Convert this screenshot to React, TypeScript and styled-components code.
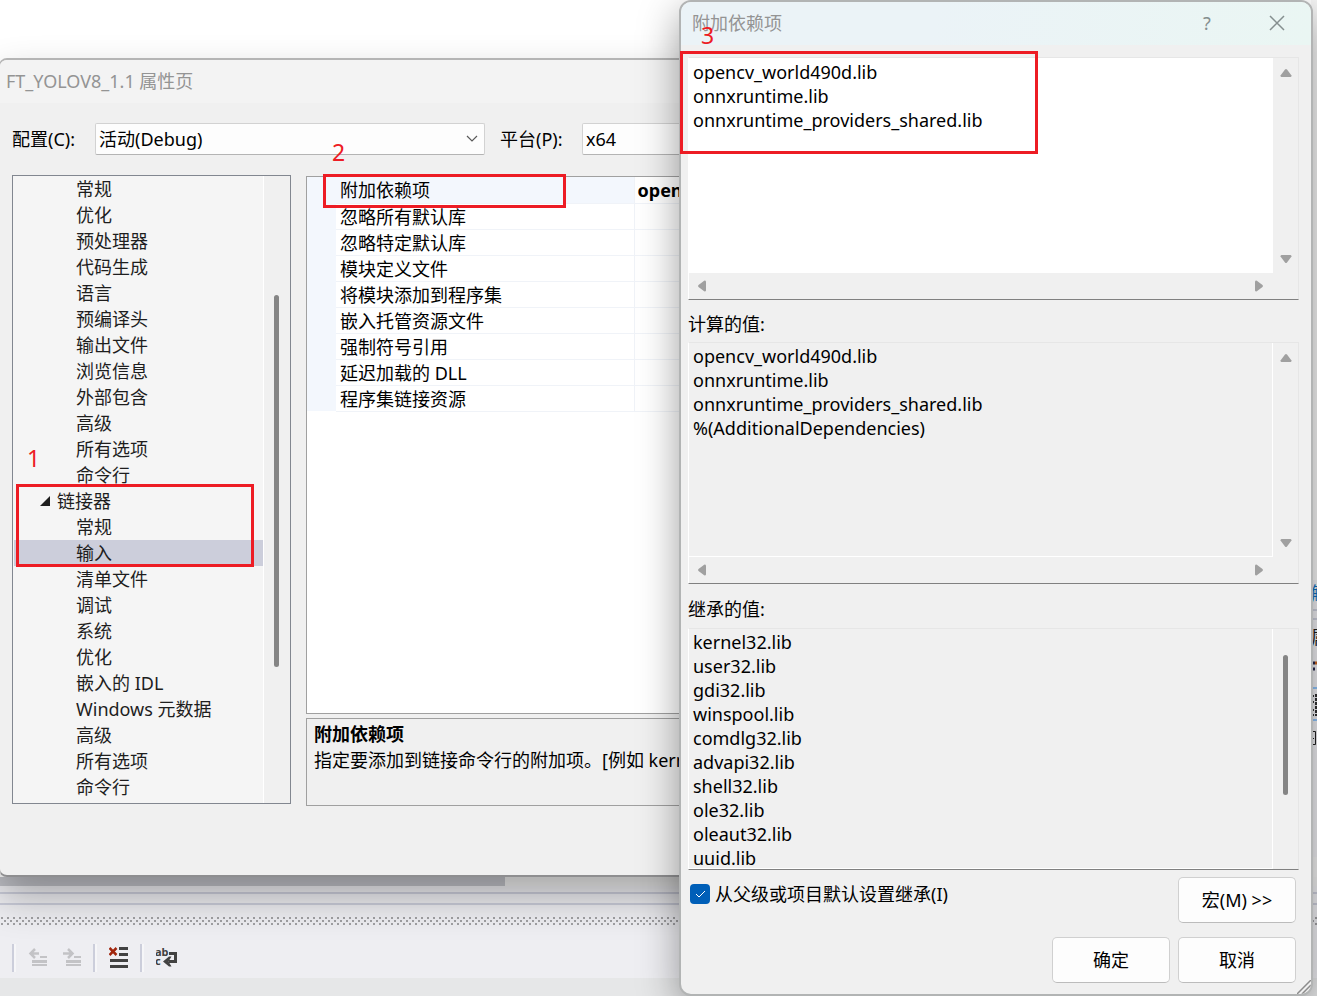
import React from "react";
import styled, { createGlobalStyle, css } from "styled-components";

const GlobalStyle = createGlobalStyle`
  * { box-sizing: border-box; }
  body {
    margin: 0;
    font-family: "Noto Sans", "Noto Sans CJK SC", sans-serif;
    font-size: 18px;
    line-height: 26px;
    color: #000;
  }
  button, select, textarea, input { font: inherit; color: inherit; }
`;

const Desktop = styled.div`
  position: relative;
  display: flex;
  flex-direction: column;
  min-height: 100vh;
  overflow: hidden;
  background: #eeeef2;
`;

/* ---------- IDE behind the windows ---------- */

const EditorRow = styled.div`
  flex: 1;
  display: flex;
  background: #fff;
`;

const EditorArea = styled.div`
  flex: 1;
`;

const SidePanel = styled.aside`
  width: 6px;
  height: 877px;
  padding-top: 580px;
  overflow: hidden;
  white-space: nowrap;
  background: linear-gradient(#f7f7f7 0 580px, #eeeef2 580px 857px, #f2f2f2 857px);
`;

const SideText = styled.div<{ $link?: boolean }>`
  height: 29px;
  color: ${(p) => (p.$link ? "#0e70c0" : "#1e1e1e")};
`;

const SideRule = styled.div`
  height: 11px;
  margin-bottom: 4px;
  border-top: 2px solid #cccedb;
  border-bottom: 2px solid #cccedb;
`;

const ScrollTrack = styled.div`
  height: 9px;
  background: #f0f0f0;
`;

const ScrollHandle = styled.div`
  width: 505px;
  height: 9px;
  background: #c2c3c9;
`;

const SplitBand = styled.div`
  height: 13px;
  margin: 6px 0 12px;
  border-top: 2px solid #cccedb;
  border-bottom: 2px solid #cccedb;
`;

const GripBar = styled.svg`
  display: block;
  width: 100%;
  height: 8px;
`;

const Toolbar = styled.div`
  display: flex;
  align-items: center;
  height: 53px;
  padding: 19px 12px 6px;
`;

const ToolSeparator = styled.span`
  width: 4px;
  height: 28px;
  border-left: 2px solid #cccedb;
  border-right: 2px solid #f6f6f8;
`;

const ToolGroup = styled.div`
  display: flex;
  gap: 14px;
  padding: 0 11px 0 12px;
`;

const ToolButton = styled.button`
  display: flex;
  align-items: center;
  height: 28px;
  padding: 0;
  border: 0;
  background: none;
`;

const StatusBar = styled.div`
  height: 18px;
  background: #e6e7e8;
`;

/* ---------- Windows ---------- */

const PropertyWindow = styled.section`
  position: absolute;
  top: 58px;
  left: -1px;
  right: 40px;
  border: 2px solid #b5b5b5;
  border-left-width: 1px;
  border-bottom-color: #8e8e90;
  border-radius: 8px;
  background: #f0f0f0;
  box-shadow: 0 20px 40px rgba(0, 0, 0, 0.3);
  overflow: hidden;
`;

const TitleBar = styled.header<{ $active?: boolean }>`
  display: flex;
  align-items: center;
  height: 43px;
  padding-bottom: 2px;
  color: #949494;
  ${(p) =>
    p.$active
      ? css`
          padding-left: 11px;
          padding-right: 11px;
          background: linear-gradient(100deg, #ebf3f7 40%, #eaf6f3);
        `
      : css`
          padding-left: 6px;
          padding-right: 6px;
          background: #f3f3f3;
        `}
`;

const Title = styled.h1`
  flex: 1;
  margin: 0;
  font-size: 18px;
  font-weight: 400;
`;

const TitleButton = styled.button`
  width: 46px;
  height: 40px;
  margin-left: 24px;
  padding: 0;
  border: 0;
  background: none;
  color: #858f8f;
  svg { display: block; margin: auto; }
`;

const ConfigRow = styled.div`
  display: flex;
  align-items: center;
  margin: 20px 12px;
`;

const FieldLabel = styled.label<{ $width: number }>`
  width: ${(p) => p.$width}px;
  white-space: nowrap;
`;

const SelectWrap = styled.div`
  position: relative;
  width: 390px;
  margin-right: 15px;
`;

const Select = styled.select`
  display: block;
  width: 100%;
  height: 32px;
  padding: 0 3px;
  appearance: none;
  border: 1px solid #d2d2d2;
  border-bottom-color: #b4b4b4;
  border-radius: 2px;
  background: #fdfdfd;
`;

const Chevron = styled.svg`
  position: absolute;
  right: 7px;
  top: 12px;
  pointer-events: none;
`;

const Columns = styled.div`
  display: flex;
  align-items: flex-start;
  gap: 15px;
  margin: 0 12px 69px;
`;

const TreePane = styled.nav`
  display: flex;
  width: 279px;
  border: 1px solid #828790;
  background: #f5f5f5;
`;

const TreeList = styled.ul`
  flex: 1;
  margin: 0;
  padding: 0 0 3px 1px;
  list-style: none;
  border-right: 1px solid #fff;
`;

const TreeItem = styled.li<{ $parent?: boolean; $selected?: boolean }>`
  display: flex;
  align-items: center;
  gap: 7px;
  height: 26px;
  padding-left: ${(p) => (p.$parent ? 26 : 62)}px;
  background: ${(p) => (p.$selected ? "#cccedb" : "none")};
  color: #1e1e1e;
  white-space: nowrap;
`;

const TreeScroll = styled.div`
  width: 26px;
  padding: 119px 10px 0;
  background: #f0f0f0;
`;

const Thumb = styled.div<{ $height: number }>`
  width: 5px;
  height: ${(p) => p.$height}px;
  border-radius: 3px;
  background: #858585;
`;

const Detail = styled.div`
  flex: 1;
  display: flex;
  flex-direction: column;
  gap: 4px;
  padding-top: 1px;
  min-width: 0;
`;

const GridPane = styled.div`
  height: 538px;
  border: 1px solid #a0a0a0;
  background: #fff;
`;

const PropertyTable = styled.table`
  width: 100%;
  border-collapse: collapse;
  table-layout: fixed;
`;

const Gutter = styled.td`
  width: 29px;
  height: 26px;
  padding: 0;
  background: #f3f7fd;
`;

const NameCell = styled.th<{ $selected: boolean }>`
  width: 298px;
  padding: 2px 4px 0;
  border-right: 1px solid #f0f3f8;
  border-bottom: 1px solid #f0f3f8;
  background: ${(p) => (p.$selected ? "#f3f7fd" : "#fff")};
  font-weight: 400;
  line-height: 23px;
  text-align: left;
`;

const ValueCell = styled.td`
  padding: 2px 3px 0;
  border-bottom: 1px solid #f0f3f8;
  font-weight: 700;
  line-height: 23px;
  white-space: nowrap;
`;

const Description = styled.div`
  height: 88px;
  padding: 2px 7px;
  border: 1px solid #a0a0a0;
  white-space: nowrap;
  overflow: hidden;
  p { margin: 0; }
`;

const Dialog = styled.section`
  position: absolute;
  top: 0;
  left: 679px;
  right: 4px;
  border: 2px solid #b2b4b4;
  border-radius: 12px;
  background: #f0f0f0;
  box-shadow: 0 12px 40px rgba(0, 0, 0, 0.38);
  overflow: hidden;
`;

const DialogBody = styled.div`
  display: flex;
  flex-direction: column;
  padding: 12px 12px 11px 7px;
`;

const BoxLabel = styled.label`
  margin: 11px 0 5px;
  & + div + & { margin: 12px 0 6px; }
`;

const TextBox = styled.div`
  display: grid;
  grid-template-columns: 1fr 25px;
  border: 1px solid #e6e6e6;
  border-left-color: #fff;
  border-bottom-color: #808080;
  background: #f0f0f0;
`;

const TextArea = styled.textarea<{ $editable?: boolean; $height: number }>`
  display: block;
  width: 100%;
  height: ${(p) => p.$height}px;
  padding: ${(p) => (p.$editable ? 2 : 1)}px 4px 0;
  border: 0;
  border-right: 1px solid #fff;
  border-bottom: 1px solid #fff;
  outline: 0;
  resize: none;
  overflow: hidden;
  background: ${(p) => (p.$editable ? "#fff" : "#f0f0f0")};
  font-size: 18px;
  line-height: 24px;
`;

const VScroll = styled.div<{ $thumb?: boolean }>`
  display: flex;
  flex-direction: column;
  align-items: center;
  justify-content: ${(p) => (p.$thumb ? "flex-start" : "space-between")};
  padding: ${(p) => (p.$thumb ? "26px 0 0" : "10px 0 9px")};
`;

const HScroll = styled.div`
  display: flex;
  align-items: center;
  justify-content: space-between;
  height: 26px;
  padding: 0 9px 1px 8px;
`;

const InheritRow = styled.div`
  display: flex;
  justify-content: space-between;
  align-items: flex-start;
  padding: 7px 3px 0 2px;
`;

const CheckLabel = styled.label`
  position: relative;
  display: flex;
  align-items: center;
  gap: 5px;
  padding-top: 4px;
  svg {
    position: absolute;
    left: 5px;
    top: 13px;
    pointer-events: none;
  }
`;

const CheckInput = styled.input`
  appearance: none;
  width: 20px;
  height: 20px;
  margin: 0;
  border-radius: 4px;
  background: #005fb8;
`;

const PushButton = styled.button`
  width: 118px;
  height: 46px;
  padding: 0;
  border: 1px solid #d0d0d0;
  border-bottom-color: #bcbcbc;
  border-radius: 5px;
  background: #fdfdfd;
`;

const ButtonRow = styled.footer`
  display: flex;
  justify-content: flex-end;
  gap: 8px;
  padding: 14px 3px 0;
`;

const ResizeGrip = styled.svg`
  position: absolute;
  right: 0;
  bottom: 0;
`;

/* ---------- Red step marks drawn over the windows ---------- */

const Mark = styled.div<{ $x: number; $y: number; $w: number; $h: number }>`
  position: absolute;
  left: ${(p) => p.$x}px;
  top: ${(p) => p.$y}px;
  width: ${(p) => p.$w}px;
  height: ${(p) => p.$h}px;
  border: 3px solid #ed1c24;
  pointer-events: none;
`;

const MarkNumber = styled.span<{ $x: number; $y: number }>`
  position: absolute;
  left: ${(p) => p.$x}px;
  top: ${(p) => p.$y}px;
  color: #ed1c24;
  font-size: 23px;
  line-height: 30px;
`;

/* ---------- Data ---------- */

type Node = { name: string; parent?: boolean; selected?: boolean };

const tree: Node[] = [
  ...["常规", "优化", "预处理器", "代码生成", "语言", "预编译头", "输出文件", "浏览信息", "外部包含", "高级", "所有选项", "命令行"].map((name) => ({ name })),
  { name: "链接器", parent: true },
  { name: "常规" },
  { name: "输入", selected: true },
  ...["清单文件", "调试", "系统", "优化", "嵌入的 IDL", "Windows 元数据", "高级", "所有选项", "命令行"].map((name) => ({ name })),
];

const properties = [
  "附加依赖项",
  "忽略所有默认库",
  "忽略特定默认库",
  "模块定义文件",
  "将模块添加到程序集",
  "嵌入托管资源文件",
  "强制符号引用",
  "延迟加载的 DLL",
  "程序集链接资源",
];

const ownLibs = ["opencv_world490d.lib", "onnxruntime.lib", "onnxruntime_providers_shared.lib"];
const computedLibs = [...ownLibs, "%(AdditionalDependencies)"];
const inheritedLibs = [
  "kernel32.lib", "user32.lib", "gdi32.lib", "winspool.lib", "comdlg32.lib",
  "advapi32.lib", "shell32.lib", "ole32.lib", "oleaut32.lib", "uuid.lib",
];

/* ---------- Small drawings ---------- */

const arrowPaths = {
  up: "M5 1.5 Q6 .5 7 1.5 L11.5 7.5 Q11.5 9 10.5 9 H1.5 Q.5 9 .5 7.5Z",
  down: "M5 8.5 Q6 9.5 7 8.5 L11.5 2.5 Q11.5 1 10.5 1 H1.5 Q.5 1 .5 2.5Z",
  left: "M1.5 5 Q.5 6 1.5 7 L7.5 11.5 Q9 11.5 9 10.5 V1.5 Q9 .5 7.5 .5Z",
  right: "M8.5 5 Q9.5 6 8.5 7 L2.5 11.5 Q1 11.5 1 10.5 V1.5 Q1 .5 2.5 .5Z",
};

const Arrow = ({ dir }: { dir: keyof typeof arrowPaths }) => {
  const vertical = dir === "up" || dir === "down";
  return (
    <svg width={vertical ? 12 : 10} height={vertical ? 10 : 12} aria-hidden="true">
      <path d={arrowPaths[dir]} fill="#a0a0a0" />
    </svg>
  );
};

const IndentIcon = ({ flip }: { flip?: boolean }) => (
  <svg width="20" height="20" viewBox="0 0 20 20" aria-hidden="true">
    <path
      d={flip ? "M1 5.5h8M6 1l4.500 4.500L6 10" : "M3 5.500h8M7 1L2.500 5.500 7 10"}
      fill="none"
      stroke="#c3c3c6"
      strokeWidth="2.5"
    />
    <path d="M12 8h7v2h-7zM4 12h15v3H4zM4 16h15v2H4z" fill="#c3c3c6" />
  </svg>
);

const ClearIcon = () => (
  <svg width="20" height="24" viewBox="0 0 20 24" aria-hidden="true">
    <path d="M10 1h9v3h-9zM10 7h9v3h-9zM1 13h18v3H1zM1 19h18v3H1z" fill="#424242" />
    <path d="M.5 2l7 7M7.5 2l-7 7" stroke="#a1260d" strokeWidth="2.5" />
  </svg>
);

const WrapIcon = () => (
  <svg width="24" height="24" viewBox="0 0 24 24" aria-hidden="true">
    <text x="-1" y="10" fontSize="11" fontWeight="700" fill="#424242">ab</text>
    <text x="-1" y="19" fontSize="11" fontWeight="700" fill="#424242">c</text>
    <path d="M13 7.500h6.500v8h-7" fill="none" stroke="#424242" strokeWidth="3" />
    <path d="M7 15.500l6-5h2.500l-3 5 3 5H13z" fill="#424242" />
  </svg>
);

function Ide() {
  return (
    <>
      <EditorRow>
        <EditorArea />
        <SidePanel>
          <SideText $link>解</SideText>
          <SideRule />
          <SideText>属性</SideText>
          <svg width="6" height="106" aria-hidden="true">
            <path d="M0 10h4M0 16h4" stroke="#26264a" strokeWidth="3" />
            <path d="M4 10h2" stroke="#c8641e" strokeWidth="3" />
            <path d="M0 35h6M0 67h6" stroke="#3399ff" strokeWidth="1" />
            <path d="M0 43h3M0 49h3M0 57h3M0 62h3M5 41v22" stroke="#333" strokeWidth="2" strokeDasharray="3 1" />
            <path d="M0 78.5h4.5v13H0M0 85.5h3" fill="none" stroke="#222" />
          </svg>
        </SidePanel>
      </EditorRow>
      <ScrollTrack>
        <ScrollHandle />
      </ScrollTrack>
      <SplitBand />
      <GripBar aria-hidden="true">
        <defs>
          <pattern id="grip" width="6" height="6" patternUnits="userSpaceOnUse">
            <path d="M1 0h2v2H1zM4 3h2v2H4z" fill="#a0a0a3" />
          </pattern>
        </defs>
        <rect width="100%" height="8" fill="url(#grip)" />
      </GripBar>
      <Toolbar>
        <ToolSeparator />
        <ToolGroup>
          <ToolButton aria-label="减少缩进"><IndentIcon /></ToolButton>
          <ToolButton aria-label="增加缩进"><IndentIcon flip /></ToolButton>
        </ToolGroup>
        <ToolSeparator />
        <ToolGroup>
          <ToolButton aria-label="全部清除"><ClearIcon /></ToolButton>
        </ToolGroup>
        <ToolSeparator />
        <ToolGroup>
          <ToolButton aria-label="自动换行"><WrapIcon /></ToolButton>
        </ToolGroup>
      </Toolbar>
      <StatusBar />
    </>
  );
}

function ProjectProperties() {
  return (
    <PropertyWindow>
      <TitleBar>
        <Title>FT_YOLOV8_1.1 属性页</Title>
      </TitleBar>
      <ConfigRow>
        <FieldLabel $width={83} htmlFor="config">配置(C):</FieldLabel>
        <SelectWrap>
          <Select id="config" defaultValue="d">
            <option value="d">活动(Debug)</option>
          </Select>
          <Chevron width="12" height="8" aria-hidden="true">
            <path d="M1 1l5 5 5-5" fill="none" stroke="#5a5a5a" strokeWidth="1.2" />
          </Chevron>
        </SelectWrap>
        <FieldLabel $width={82} htmlFor="platform">平台(P):</FieldLabel>
        <SelectWrap>
          <Select id="platform" defaultValue="x64">
            <option value="x64">x64</option>
          </Select>
        </SelectWrap>
      </ConfigRow>
      <Columns>
        <TreePane>
          <TreeList>
            {tree.map((node, i) => (
              <TreeItem key={i} $parent={node.parent} $selected={node.selected}>
                {node.parent && (
                  <svg width="10" height="10" aria-hidden="true">
                    <path d="M10 0v10H0z" fill="#1e1e1e" />
                  </svg>
                )}
                {node.name}
              </TreeItem>
            ))}
          </TreeList>
          <TreeScroll>
            <Thumb $height={372} />
          </TreeScroll>
        </TreePane>
        <Detail>
          <GridPane>
            <PropertyTable>
              <tbody>
                {properties.map((name, i) => (
                  <tr key={name}>
                    <Gutter />
                    <NameCell scope="row" $selected={i === 0}>{name}</NameCell>
                    <ValueCell>{i === 0 ? "opencv" : ""}</ValueCell>
                  </tr>
                ))}
              </tbody>
            </PropertyTable>
          </GridPane>
          <Description>
            <p><b>附加依赖项</b></p>
            <p>指定要添加到链接命令行的附加项。[例如 kernel32.lib]</p>
          </Description>
        </Detail>
      </Columns>
    </PropertyWindow>
  );
}

function DependencyDialog() {
  return (
    <Dialog role="dialog" aria-label="附加依赖项">
      <TitleBar $active>
        <Title>附加依赖项</Title>
        <TitleButton aria-label="帮助">?</TitleButton>
        <TitleButton aria-label="关闭">
          <svg width="16" height="16" aria-hidden="true">
            <path d="M1 1l14 14M15 1L1 15" stroke="#858f8f" strokeWidth="1.5" />
          </svg>
        </TitleButton>
      </TitleBar>
      <DialogBody>
        <TextBox>
          <TextArea $editable $height={215} aria-label="附加依赖项" defaultValue={ownLibs.join("\n")} />
          <VScroll><Arrow dir="up" /><Arrow dir="down" /></VScroll>
          <HScroll><Arrow dir="left" /><Arrow dir="right" /></HScroll>
        </TextBox>
        <BoxLabel htmlFor="computed">计算的值:</BoxLabel>
        <TextBox>
          <TextArea id="computed" readOnly $height={214} value={computedLibs.join("\n")} />
          <VScroll><Arrow dir="up" /><Arrow dir="down" /></VScroll>
          <HScroll><Arrow dir="left" /><Arrow dir="right" /></HScroll>
        </TextBox>
        <BoxLabel htmlFor="inherited">继承的值:</BoxLabel>
        <TextBox>
          <TextArea id="inherited" readOnly $height={240} value={inheritedLibs.join("\n")} />
          <VScroll $thumb><Thumb $height={140} /></VScroll>
        </TextBox>
        <InheritRow>
          <CheckLabel>
            <CheckInput type="checkbox" defaultChecked />
            <svg width="11" height="9" aria-hidden="true">
              <path d="M1 4l3 3 6-6" fill="none" stroke="#fff" />
            </svg>
            从父级或项目默认设置继承(I)
          </CheckLabel>
          <PushButton>宏(M) &gt;&gt;</PushButton>
        </InheritRow>
        <ButtonRow>
          <PushButton>确定</PushButton>
          <PushButton>取消</PushButton>
        </ButtonRow>
      </DialogBody>
      <ResizeGrip width="14" height="14" aria-hidden="true">
        <path d="M0 14L14 0M5 14l9-9M10 14l4-4" stroke="#8c8c8c" strokeWidth="1.5" />
      </ResizeGrip>
    </Dialog>
  );
}

export default function App() {
  return (
    <>
      <GlobalStyle />
      <Desktop>
        <Ide />
        <ProjectProperties />
        <DependencyDialog />
        <Mark $x={16} $y={484} $w={238} $h={83} />
        <MarkNumber $x={27} $y={443}>1</MarkNumber>
        <Mark $x={323} $y={174} $w={243} $h={34} />
        <MarkNumber $x={332} $y={137}>2</MarkNumber>
        <Mark $x={680} $y={51} $w={358} $h={103} />
        <MarkNumber $x={701} $y={20}>3</MarkNumber>
      </Desktop>
    </>
  );
}
